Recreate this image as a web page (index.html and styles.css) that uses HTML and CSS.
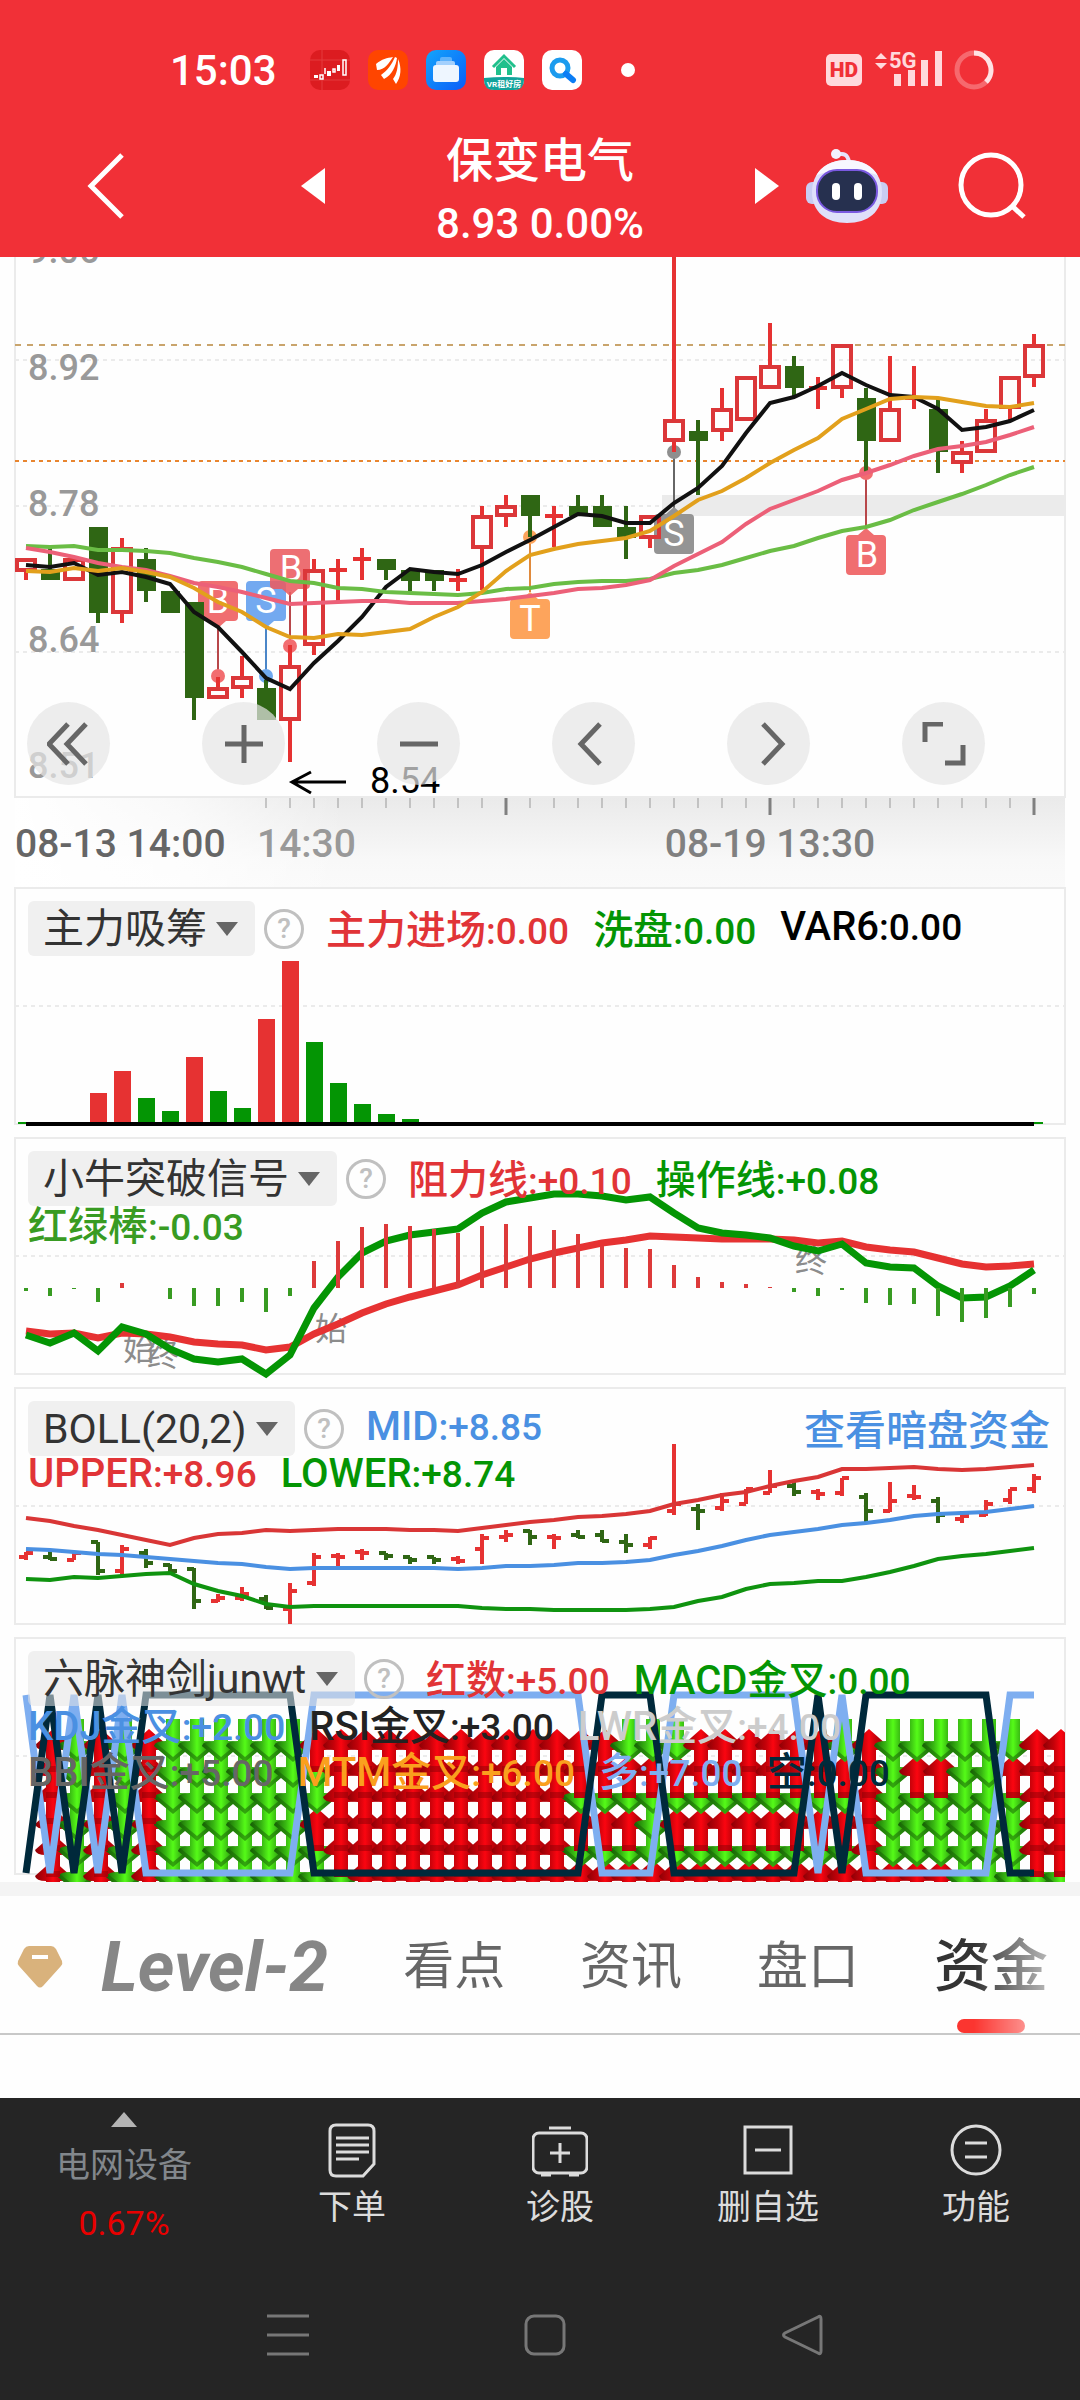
FILE: index.html
```
<!DOCTYPE html>
<html lang="zh-CN">

<head>
  <meta charset="utf-8">
  <meta name="viewport" content="width=device-width, initial-scale=1">
  <title>保变电气</title>
  <link rel="stylesheet" href="styles.css">
</head>

<body>
  <header class="header">
    <div class="status">
      <span class="clock">15:03</span>
      <div class="apps">
        <svg viewBox="0 0 40 40" width="40" height="40">
          <rect width="40" height="40" rx="10" fill="#dc1c20"/>
          <path d="M0 10h40M0 30h40M12 0v40" stroke="#e43a3c" stroke-width="1"/>
          <path d="M4 25h4v3H4zM17 21h4v5h-4zM27 15h3v6h-3z" fill="#fff"/>
          <path d="M10 25h3v4h-3zM15 18v6M23 19h2v3h-2zM33 10h3v15h-3z" fill="none" stroke="#fff" stroke-width="1.5"/>
        </svg>
        <svg viewBox="0 0 40 40" width="40" height="40">
          <rect width="40" height="40" rx="10" fill="#ff4500"/>
          <path d="M8 14C14 9 19 8 25 7C21 13 17 20 9 20zM13 25C19 21 24 14 27 7L29 8C28 16 24 25 16 29zM25 29C29 24 30 17 30 9C34 18 33 27 28 34z" fill="#fff"/>
        </svg>
        <svg viewBox="0 0 40 40" width="40" height="40">
          <defs>
            <linearGradient id="fileBg" x1="0" y1="0" x2="1" y2="1">
              <stop offset="0" stop-color="#12a5fb"/>
              <stop offset="1" stop-color="#0c5cf8"/>
            </linearGradient>
          </defs>
          <rect width="40" height="40" rx="10" fill="url(#fileBg)"/>
          <rect x="14" y="7" width="12" height="8" rx="2" fill="#5fb2fb"/>
          <rect x="10" y="11" width="19" height="8" rx="2" fill="#a3d0fd"/>
          <rect x="7" y="15" width="26" height="17" rx="3" fill="#eef6ff"/>
        </svg>
        <svg viewBox="0 0 40 40" width="40" height="40">
          <rect width="40" height="40" rx="10" fill="#fff"/>
          <path d="M0 28Q20 26 40 28V30Q40 40 30 40H10Q0 40 0 30z" fill="#12a39b"/>
          <path d="M9 17L20 6L31 17" fill="none" stroke="#20c08c" stroke-width="3"/>
          <path d="M12 17L20 9L28 17V25H23V18H17V25H12z" fill="#20c08c"/>
          <text x="20" y="37" class="vr">VR租好房</text>
        </svg>
        <svg viewBox="0 0 40 40" width="40" height="40">
          <rect width="40" height="40" rx="10" fill="#fff"/>
          <circle cx="18" cy="18" r="8" fill="none" stroke="#1c9bee" stroke-width="5"/>
          <path d="M24 24L31 30" stroke="#0b7df5" stroke-width="6" stroke-linecap="round"/>
        </svg>
      </div>
      <i class="more-dot"></i>
      <div class="signal">
        <span class="hd">HD</span>
        <svg viewBox="0 -6 70 52" width="70" height="52" fill="#ffd9dc">
          <path d="M2 9L8 3L14 9zM2 13H14L8 19z"/>
          <text x="16" y="18" class="net">5G</text>
          <path d="M21 24h7v12h-7zM35 20h7v16h-7zM48 10h7v26h-7zM62 1h7v35h-7z"/>
        </svg>
        <svg viewBox="0 0 40 40" width="40" height="40" fill="none" stroke-width="5">
          <circle cx="20" cy="20" r="17" stroke="#f6696e"/>
          <path d="M20 3A17 17 0 0 1 32 32" stroke="#ffe2e4"/>
        </svg>
      </div>
    </div>
    <nav class="nav">
      <div class="nav-left">
        <button class="icon-btn" aria-label="返回">
          <svg viewBox="0 0 40 68" width="40" height="68" fill="none" stroke="#fff" stroke-width="5">
            <path d="M36 3L5 34L36 65"/>
          </svg>
        </button>
      </div>
      <div class="stock">
        <button class="icon-btn" aria-label="上一只">
          <svg viewBox="0 0 24 36" width="24" height="36"><path d="M0 18L24 0V36z" fill="#fff"/></svg>
        </button>
        <div class="stock-info">
          <h1>保变电气</h1>
          <p>8.93 0.00%</p>
        </div>
        <button class="icon-btn" aria-label="下一只">
          <svg viewBox="0 0 24 36" width="24" height="36"><path d="M24 18L0 0V36z" fill="#fff"/></svg>
        </button>
      </div>
      <div class="nav-right">
        <button class="icon-btn" aria-label="智能助手">
          <svg viewBox="0 0 82 76" width="82" height="76">
            <path d="M31 7Q41 3 43 14" fill="none" stroke="#e6e3fb" stroke-width="4"/>
            <circle cx="30" cy="6" r="5" fill="#f3f2ff"/>
            <rect x="0" y="34" width="14" height="22" rx="6" fill="#c9cdf3"/>
            <rect x="68" y="34" width="14" height="22" rx="6" fill="#c9cdf3"/>
            <path d="M41 12C62 12 76 25 76 44C76 64 62 75 41 75C20 75 6 64 6 44C6 25 20 12 41 12z" fill="#dfe0fa"/>
            <path d="M41 12C56 12 67 18 72 28C60 20 22 20 10 28C15 18 26 12 41 12z" fill="#f8f7ff"/>
            <rect x="11" y="22" width="60" height="42" rx="20" fill="#26304f" stroke="#7a59e0" stroke-width="2"/>
            <rect x="26" y="35" width="8" height="17" rx="4" fill="#fff"/>
            <rect x="48" y="35" width="8" height="17" rx="4" fill="#fff"/>
          </svg>
        </button>
        <button class="icon-btn" aria-label="搜索">
          <svg viewBox="0 0 68 68" width="68" height="68" fill="none" stroke="#fff" stroke-width="5">
            <circle cx="33" cy="33" r="30"/>
            <path d="M54 54L66 65"/>
          </svg>
        </button>
      </div>
    </nav>
  </header>

  <main>
    <section class="chart">
      <svg class="plot" viewBox="0 257 1080 630" id="kline">
        <defs>
          <linearGradient id="axisBg" x1="0" y1="0" x2="0" y2="1">
            <stop offset="0" stop-color="#eaeaea"/>
            <stop offset="0.7" stop-color="#f8f8f8"/>
            <stop offset="1" stop-color="#fafafa"/>
          </linearGradient>
          <linearGradient id="axisFade">
            <stop offset="0" stop-color="#fff"/>
            <stop offset="0.5" stop-color="#fff" stop-opacity="0.7"/>
            <stop offset="1" stop-color="#fff" stop-opacity="0"/>
          </linearGradient>
        </defs>
        <rect x="16" y="797" width="1049" height="90" fill="url(#axisBg)"/>
        <rect x="15" y="797" width="330" height="90" fill="url(#axisFade)"/>
        <path class="frame" d="M15 257V797H1065V257"/>
        <rect x="662" y="495" width="403" height="21" fill="#ebebeb"/>
        <path class="grid" d="M15 360H1065M15 506H1065M15 652H1065"/>
        <path d="M15 345H1065" stroke="#c9a46c" stroke-width="2" stroke-dasharray="6 6"/>
        <path d="M15 461H1065" stroke="#e8852f" stroke-width="2" stroke-dasharray="4 4"/>
        <g class="price">
          <text x="28" y="263">9.06</text>
          <text x="28" y="380">8.92</text>
          <text x="28" y="516">8.78</text>
          <text x="28" y="652">8.64</text>
          <text x="28" y="778">8.51</text>
        </g>
        <g class="marks">
          <path d="M218 624V676" stroke="#b8474a"/>
          <path d="M290 592V644" stroke="#b8474a"/>
          <path d="M266 624V676" stroke="#4a86c8"/>
          <path d="M530 537V592" stroke="#e08a3c"/>
          <path d="M674 452V510" stroke="#666"/>
          <path d="M866 473V532" stroke="#b8474a"/>
          <circle cx="218" cy="676" r="7" fill="#f26d70"/>
          <circle cx="290" cy="646" r="7" fill="#f26d70"/>
          <circle cx="266" cy="676" r="7" fill="#6fa8ef"/>
          <circle cx="530" cy="537" r="7" fill="#fda45c"/>
          <circle cx="674" cy="452" r="7" fill="#8e8e8e"/>
          <circle cx="866" cy="473" r="7" fill="#f26d70"/>
          <path d="M202 581H234Q238 581 238 585V617Q238 621 234 621H226L218 628L210 621H202Q198 621 198 617V585Q198 581 202 581z" fill="#f06e70"/>
          <path d="M250 581H282Q286 581 286 585V617Q286 621 282 621H274L266 628L258 621H250Q246 621 246 617V585Q246 581 250 581z" fill="#73a9f0"/>
          <path d="M274 549H306Q310 549 310 553V585Q310 589 306 589H298L290 596L282 589H274Q270 589 270 585V553Q270 549 274 549z" fill="#ea5b60" fill-opacity="0.88"/>
          <path d="M514 599H522L530 592L538 599H546Q550 599 550 603V635Q550 639 546 639H514Q510 639 510 635V603Q510 599 514 599z" fill="#fda45c"/>
          <path d="M658 514H666L674 507L682 514H690Q694 514 694 518V550Q694 554 690 554H658Q654 554 654 550V518Q654 514 658 514z" fill="#949494"/>
          <path d="M850 535H858L866 528L874 535H882Q886 535 886 539V571Q886 575 882 575H850Q846 575 846 571V539Q846 535 850 535z" fill="#f06e70"/>
          <text x="218" y="613">B</text>
          <text x="266" y="613">S</text>
          <text x="291" y="581">B</text>
          <text x="530" y="631">T</text>
          <text x="674" y="546">S</text>
          <text x="867" y="567">B</text>
        </g>
        <g id="candles"></g>
        <path d="M346 782H292M311 772L292 782L311 793" fill="none" stroke="#000" stroke-width="3"/>
        <text x="370" y="793" class="low">8.54</text>
        <g id="ticks"></g>
        <g class="date">
          <text x="15" y="857" fill="#666">08-13 14:00</text>
          <text x="257" y="857" fill="#999">14:30</text>
          <text x="770" y="857" fill="#808080" text-anchor="middle">08-19 13:30</text>
        </g>
      </svg>
      <div class="tools">
        <button aria-label="最左"><svg viewBox="0 0 44 44"><path d="M21 2L2 22L21 42M39 2L20 22L39 42"/></svg></button>
        <button aria-label="放大"><svg viewBox="0 0 44 44"><path d="M22 3V41M3 22H41"/></svg></button>
        <button aria-label="缩小"><svg viewBox="0 0 44 44"><path d="M3 22H41"/></svg></button>
        <button aria-label="左移"><svg viewBox="0 0 44 44"><path d="M28 2L9 22L28 42"/></svg></button>
        <button aria-label="右移"><svg viewBox="0 0 44 44"><path d="M16 2L35 22L16 42"/></svg></button>
        <button aria-label="全屏"><svg viewBox="0 0 44 44"><path d="M21 2H3V20M41 23V41H23"/></svg></button>
      </div>
    </section>

    <section class="panel">
      <svg class="plot" viewBox="0 887 1080 250" id="zlxc">
        <rect class="frame" x="15" y="888" width="1050" height="236"/>
        <path class="grid" d="M15 1006H1065"/>
      </svg>
      <div class="legend">
        <div class="row">
          <select class="indicator" aria-label="指标一"><option>主力吸筹</option></select>
          <button class="help" aria-label="说明">?</button>
          <span class="red">主力进场<b>:0.00</b></span>
          <span class="green">洗盘<b>:0.00</b></span>
          <span class="black">VAR6<b>:0.00</b></span>
        </div>
      </div>
    </section>

    <section class="panel">
      <svg class="plot" viewBox="0 1137 1080 250" id="xntp">
        <rect class="frame" x="15" y="1138" width="1050" height="236"/>
        <path class="grid" d="M15 1256H1065"/>
        <g class="hint">
          <text x="123" y="1360">始</text>
          <text x="147" y="1366">终</text>
          <text x="315" y="1340">始</text>
          <text x="795" y="1272">终</text>
        </g>
      </svg>
      <div class="legend">
        <div class="row">
          <select class="indicator" aria-label="指标二"><option>小牛突破信号</option></select>
          <button class="help" aria-label="说明">?</button>
          <span class="red">阻力线<b>:+0.10</b></span>
          <span class="green">操作线<b>:+0.08</b></span>
        </div>
        <div class="row">
          <span class="leaf">红绿棒<b>:-0.03</b></span>
        </div>
      </div>
    </section>

    <section class="panel">
      <svg class="plot" viewBox="0 1387 1080 250" id="boll">
        <rect class="frame" x="15" y="1388" width="1050" height="236"/>
        <path class="grid" d="M15 1506H1065"/>
      </svg>
      <div class="legend">
        <div class="row">
          <select class="indicator" aria-label="指标三"><option>BOLL(20,2)</option></select>
          <button class="help" aria-label="说明">?</button>
          <span class="blue">MID<b>:+8.85</b></span>
          <a class="dark-pool" href="#">查看暗盘资金</a>
        </div>
        <div class="row">
          <span class="red">UPPER<b>:+8.96</b></span>
          <span class="green">LOWER<b>:+8.74</b></span>
        </div>
      </div>
    </section>

    <section class="panel">
      <svg class="plot" viewBox="0 1637 1080 245" id="lmsj">
        <defs>
          <linearGradient id="upBg">
            <stop offset="0" stop-color="#8c0005"/>
            <stop offset="0.3" stop-color="#c4020a"/>
            <stop offset="0.5" stop-color="#fb0510"/>
            <stop offset="0.7" stop-color="#c4020a"/>
            <stop offset="1" stop-color="#8c0005"/>
          </linearGradient>
          <linearGradient id="downBg">
            <stop offset="0" stop-color="#176206"/>
            <stop offset="0.3" stop-color="#37b512"/>
            <stop offset="0.5" stop-color="#55fb18"/>
            <stop offset="0.7" stop-color="#37b512"/>
            <stop offset="1" stop-color="#176206"/>
          </linearGradient>
          <g id="up">
            <path d="M0 0L18 16Q17 21 7 21V43H-7V21Q-17 21 -18 16z" fill="url(#upBg)"/>
            <path d="M-7 37H7V43H-7z" fill="#8c0005" fill-opacity="0.5"/>
          </g>
          <g id="down">
            <path d="M-7 0H7V22Q18 22 19 27L0 43L-19 27Q-18 22 -7 22z" fill="url(#downBg)"/>
            <path d="M-19 27L0 43L19 27L17 24L0 38L-17 24z" fill="#176206" fill-opacity="0.55"/>
          </g>
        </defs>
        <rect class="frame" x="15" y="1638" width="1050" height="236"/>
        <path class="grid" d="M15 1756H1065"/>
        <svg x="15" y="1637" width="1050" height="245" viewBox="15 1637 1050 245" id="arrows"></svg>
      </svg>
      <div class="legend">
        <div class="row">
          <select class="indicator" aria-label="指标四"><option>六脉神剑junwt</option></select>
          <button class="help" aria-label="说明">?</button>
          <span class="red">红数<b>:+5.00</b></span>
          <span class="green">MACD金叉<b>:0.00</b></span>
        </div>
        <div class="row">
          <span class="blue">KDJ金叉<b>:+2.00</b></span>
          <span class="ink">RSI金叉<b>:+3.00</b></span>
          <span class="silver">LWR金叉<b>:+4.00</b></span>
        </div>
        <div class="row">
          <span class="gray">BBI金叉<b>:+5.00</b></span>
          <span class="orange">MTM金叉<b>:+6.00</b></span>
          <span class="sky">多<b>:+7.00</b></span>
          <span class="navy">空<b>:0.00</b></span>
        </div>
      </div>
    </section>

    <nav class="tabs">
      <svg class="gem" viewBox="0 0 46 44" width="46" height="44">
        <path d="M12 1H34Q37 1 39 4L45 16Q46 19 44 21L26 41Q23 44 20 41L2 21Q0 19 1 16L7 4Q9 1 12 1z" fill="#d9b27c"/>
        <rect x="15" y="10" width="16" height="4" fill="#fff"/>
      </svg>
      <a class="level" href="#">Level-2</a>
      <a href="#">看点</a>
      <a href="#">资讯</a>
      <a href="#">盘口</a>
      <a class="active" href="#">资金</a>
    </nav>
  </main>

  <footer class="footer">
    <div class="actions">
      <a class="sector" href="#">
        <svg viewBox="0 0 26 15" width="26" height="15"><path d="M0 15L13 0L26 15z" fill="#b4b4b4"/></svg>
        <span>电网设备</span>
        <em>0.67%</em>
      </a>
      <button>
        <svg viewBox="0 0 56 56" width="56" height="56">
          <path d="M12 3H44Q50 3 50 9V42L39 54H12Q6 54 6 48V9Q6 3 12 3z"/>
          <path d="M12 16H45M12 23H45M12 30H45M12 37H35"/>
        </svg>
        下单
      </button>
      <button>
        <svg viewBox="0 0 56 56" width="56" height="56">
          <rect x="1" y="11" width="54" height="40" rx="6"/>
          <path d="M17 6H39M28 21V41M18 31H38M9 53H19M37 53H47"/>
        </svg>
        诊股
      </button>
      <button>
        <svg viewBox="0 0 56 56" width="56" height="56">
          <rect x="5" y="5" width="46" height="46"/>
          <path d="M15 28H41"/>
        </svg>
        删自选
      </button>
      <button>
        <svg viewBox="0 0 56 56" width="56" height="56">
          <circle cx="28" cy="28" r="24"/>
          <path d="M17 21H39M17 35H39"/>
        </svg>
        功能
      </button>
    </div>
    <div class="system">
      <button aria-label="最近任务"><svg viewBox="0 0 42 42"><path d="M0 2H42M0 21H42M0 40H42"/></svg></button>
      <button aria-label="主页"><svg viewBox="0 0 42 42"><rect x="2" y="2" width="38" height="38" rx="8"/></svg></button>
      <button aria-label="返回"><svg viewBox="0 0 42 42"><path d="M37 3Q40 1 40 5V37Q40 41 37 39L4 23Q1 21 4 19z"/></svg></button>
    </div>
  </footer>

  <script src="chart.js"></script>
</body>

</html>
```
FILE: styles.css
```
* {
  box-sizing: border-box;
}

body {
  margin: 0;
  background: #fefefe;
  font-family: Roboto, "Noto Sans CJK SC", sans-serif;
}

button {
  padding: 0;
  border: 0;
  background: none;
  font-family: inherit;
}

a {
  text-decoration: none;
}

svg {
  display: block;
}

h1, p {
  margin: 0;
}

/* header */
.header {
  background: #f13037;
  color: #fff;
}

.status {
  display: flex;
  align-items: center;
  height: 128px;
  padding: 12px 86px 0 170px;
}

.clock {
  width: 140px;
  font-size: 42px;
  font-weight: 500;
}

.apps {
  display: flex;
  gap: 18px;
}

.vr {
  fill: #fff;
  font-size: 8px;
  font-weight: 700;
  text-anchor: middle;
}

.more-dot {
  width: 14px;
  height: 14px;
  margin-left: 39px;
  border-radius: 50%;
  background: #fff;
}

.signal {
  display: flex;
  align-items: center;
  gap: 11px;
  margin-left: auto;
}

.hd {
  padding: 0 4px;
  border-radius: 5px;
  background: #ffd9dc;
  color: #f13037;
  font-size: 21px;
  font-weight: 900;
  line-height: 32px;
}

.net {
  font-size: 22px;
  font-weight: 700;
}

.nav {
  display: grid;
  grid-template-columns: 290px 1fr 290px;
  align-items: center;
  height: 129px;
}

.nav-left {
  padding-left: 86px;
}

.icon-btn {
  margin-bottom: 14px;
}

.stock {
  display: flex;
  align-items: center;
  justify-content: space-between;
  padding: 0 11px;
}

.stock-info {
  text-align: center;
}

.stock-info h1 {
  font-size: 47px;
  font-weight: 500;
  line-height: 62px;
}

.stock-info p {
  font-size: 42px;
  font-weight: 500;
  line-height: 64px;
}

.nav-right {
  display: flex;
  align-items: center;
  justify-content: space-between;
  padding: 0 54px 0 16px;
}

/* charts */
.chart {
  position: relative;
}

.plot {
  width: 100%;
  height: auto;
}

.frame {
  fill: none;
  stroke: #ebebeb;
  stroke-width: 2;
}

.grid {
  stroke: #ebebeb;
  stroke-width: 2;
  stroke-dasharray: 4 4;
}

.price {
  fill: #999;
  font-size: 36px;
  font-weight: 500;
}

.marks {
  fill: #fff;
  stroke-width: 2;
  font-size: 36px;
  text-anchor: middle;
}

.low {
  font-size: 36px;
}

.date {
  font-size: 39px;
  font-weight: 500;
}

.hint {
  fill: #8c8c8c;
  font-size: 32px;
}

.line {
  fill: none;
}

.tools {
  position: absolute;
  right: 95px;
  bottom: 102px;
  left: 27px;
  display: flex;
  justify-content: space-between;
}

.tools button {
  display: grid;
  place-items: center;
  width: 83px;
  height: 83px;
  border-radius: 50%;
  background: rgba(229, 229, 229, 0.7);
}

.tools svg {
  width: 44px;
  height: 44px;
  fill: none;
  stroke: #666;
  stroke-width: 5;
}

.panel {
  display: grid;
}

.plot, .legend {
  grid-area: 1 / 1;
}

.legend {
  padding: 14px 30px 0 28px;
  font-size: 40px;
}

.row {
  display: flex;
  align-items: center;
  gap: 24px;
  height: 46px;
  white-space: nowrap;
}

.row:first-child {
  height: 55px;
  margin-bottom: -4px;
}

.row span, .dark-pool {
  padding-bottom: 4px;
  font-weight: 500;
}

.row b {
  font-size: 37px;
  font-weight: 500;
}

.indicator {
  appearance: none;
  height: 55px;
  margin-right: -15px;
  padding: 0 48px 0 15px;
  border: 0;
  border-radius: 6px;
  background: rgba(228, 228, 228, 0.55) url("data:image/svg+xml,%3Csvg xmlns='http://www.w3.org/2000/svg' width='22' height='14'%3E%3Cpath d='M0 0H22L11 14z' fill='%23666'/%3E%3C/svg%3E") no-repeat right 17px center;
  color: #333;
  font-family: inherit;
  font-size: 41px;
}

.help {
  width: 40px;
  height: 40px;
  margin-right: -2px;
  border: 3px solid #c0c0c0;
  border-radius: 50%;
  color: #c0c0c0;
  font-size: 28px;
  font-weight: 500;
  line-height: 34px;
}

.dark-pool {
  margin-left: auto;
  font-size: 41px;
}

.red {
  color: #e13437;
}

.green {
  color: #049504;
}

.leaf {
  color: #389b22;
}

.black {
  color: #000;
}

.blue, .dark-pool {
  color: #4a90e2;
}

.ink {
  color: #222;
}

.silver {
  color: #ccc;
}

.gray {
  color: #666;
}

.orange {
  color: #faa01e;
}

.sky {
  color: #7eaef0;
}

.navy {
  color: #002b3c;
}

/* tabs */
.tabs {
  display: flex;
  align-items: center;
  height: 153px;
  padding: 5px 32px 0 17px;
  border-top: 14px solid #f4f4f4;
  border-bottom: 2px solid #c8c8c8;
  white-space: nowrap;
}

.tabs a {
  margin-left: auto;
  color: #666;
  font-size: 51px;
  line-height: 132px;
}

.tabs .level {
  margin-left: 38px;
  color: #868686;
  font-size: 70px;
  font-style: italic;
  font-weight: 700;
}

.tabs .active {
  position: relative;
  color: #333;
  font-size: 57px;
  font-weight: 500;
  -webkit-mask-image: linear-gradient(to right, #000 35%, rgba(0, 0, 0, 0.35));
  mask-image: linear-gradient(to right, #000 35%, rgba(0, 0, 0, 0.35));
}

.tabs .active::after {
  content: "";
  position: absolute;
  bottom: 0;
  left: 50%;
  width: 68px;
  height: 14px;
  margin-left: -34px;
  border-radius: 7px;
  background: #fb3530;
}

/* footer */
.footer {
  margin-top: 63px;
  background: #252525;
}

.actions {
  display: flex;
  height: 176px;
}

.actions button {
  display: flex;
  flex: 208;
  flex-direction: column;
  align-items: center;
  padding-top: 24px;
  color: #dcdcdc;
  font-size: 34px;
  line-height: 58px;
}

.actions button svg {
  fill: none;
  stroke: #dcdcdc;
  stroke-width: 3;
}

.sector {
  display: flex;
  flex: 248;
  flex-direction: column;
  align-items: center;
  padding-top: 14px;
  color: #82878c;
  font-size: 34px;
}

.sector span {
  margin-top: 11px;
  line-height: 54px;
}

.sector em {
  color: #e80000;
  font-style: normal;
  line-height: 62px;
}

.system {
  display: flex;
  justify-content: space-between;
  height: 126px;
  padding: 0 257px 0 267px;
}

.system button {
  display: grid;
  place-items: start;
  padding-top: 40px;
}

.system svg {
  width: 42px;
  height: 42px;
  fill: none;
  stroke: #777;
  stroke-width: 3;
}
```
FILE: chart.js
```
const NS = 'http://www.w3.org/2000/svg';
const px = (i) => 26 + i * 24;

function add(parent, name, attrs) {
  const el = document.createElementNS(NS, name);
  Object.keys(attrs).forEach((key) => el.setAttribute(key, attrs[key]));
  parent.appendChild(el);
  return el;
}

function line(parent, ys, color, width) {
  const points = ys.map((y, i) => px(i) + ',' + y).join(' ');
  add(parent, 'polyline', { class: 'line', points, stroke: color, 'stroke-width': width || 4 });
}

// type, high, body top, body bottom, low
const candles = [
  ['r', 558, 558, 572, 580], ['g', 548, 569, 580, 580], ['r', 558, 558, 581, 581], ['g', 527, 527, 613, 623],
  ['r', 538, 547, 614, 623], ['g', 548, 559, 591, 602], ['g', 591, 591, 613, 613], ['g', 602, 602, 698, 720],
  ['r', 677, 687, 699, 699], ['r', 656, 676, 689, 698], ['g', 680, 688, 720, 720], ['r', 645, 665, 721, 762],
  ['r', 559, 569, 646, 655], ['r', 559, 570, 570, 602], ['r', 548, 559, 559, 580], ['g', 559, 559, 570, 580],
  ['g', 570, 570, 581, 591], ['g', 570, 570, 581, 591], ['r', 569, 580, 580, 591], ['r', 506, 515, 549, 590],
  ['r', 495, 505, 517, 527], ['g', 495, 495, 516, 537], ['r', 506, 516, 516, 547], ['g', 495, 506, 516, 516],
  ['g', 495, 506, 527, 527], ['g', 506, 527, 538, 559], ['r', 515, 515, 539, 548], ['r', 248, 419, 442, 452],
  ['g', 420, 431, 441, 495], ['r', 388, 408, 432, 441], ['r', 376, 376, 421, 421], ['r', 323, 365, 389, 389],
  ['g', 356, 366, 388, 397], ['r', 377, 388, 388, 409], ['r', 344, 344, 389, 398], ['g', 388, 398, 441, 472],
  ['r', 356, 408, 442, 442], ['r', 366, 398, 398, 409], ['g', 399, 409, 452, 473], ['r', 441, 451, 464, 473],
  ['r', 409, 419, 453, 453], ['r', 376, 376, 409, 420], ['r', 334, 344, 378, 387]
];

const kline = document.getElementById('candles');
candles.forEach(([type, high, top, bottom, low], i) => {
  const x = px(i);
  const color = type === 'r' ? '#e63232' : '#2f6614';
  add(kline, 'path', { d: `M${x} ${high}V${top}M${x} ${bottom}V${low}`, stroke: color, 'stroke-width': 4 });
  if (top === bottom) {
    add(kline, 'path', { d: `M${x - 9} ${top}H${x + 9}`, stroke: color, 'stroke-width': 4 });
  } else if (type === 'r') {
    add(kline, 'rect', { x: x - 9, y: top + 2, width: 18, height: bottom - top - 4, fill: 'none', stroke: '#db3739', 'stroke-width': 4 });
  } else {
    add(kline, 'rect', { x: x - 9, y: top, width: 19, height: bottom - top, fill: color });
  }
});

line(kline, [565, 567, 563, 575, 572, 577, 584, 612, 627, 652, 678, 689, 663, 641, 617, 587, 569, 572, 574, 565, 552, 540, 527, 514, 516, 523, 523, 503, 488, 466, 433, 403, 397, 386, 373, 385, 395, 397, 409, 430, 427, 421, 410], '#111');
line(kline, [546, 547, 546, 550, 550, 551, 553, 558, 562, 567, 574, 581, 583, 588, 589, 592, 593, 594, 595, 593, 589, 588, 584, 582, 581, 581, 579, 573, 570, 565, 558, 551, 546, 538, 531, 527, 520, 510, 502, 494, 485, 475, 467], '#6abd45');
line(kline, [548, 552, 557, 563, 567, 570, 576, 583, 587, 592, 598, 604, 603, 602, 601, 601, 603, 603, 603, 601, 599, 596, 593, 589, 588, 585, 580, 566, 554, 542, 524, 509, 500, 491, 480, 473, 465, 456, 449, 446, 442, 435, 427], '#ec6078');
line(kline, [571, 572, 568, 571, 568, 572, 577, 588, 602, 612, 627, 637, 638, 634, 635, 632, 629, 617, 607, 592, 571, 555, 549, 544, 541, 538, 531, 516, 500, 491, 478, 463, 450, 438, 419, 409, 399, 397, 398, 402, 406, 407, 403], '#e2a01c');

// time axis
const ticks = document.getElementById('ticks');
for (let i = 10; i < 43; i++) {
  const major = i === 20 || i === 31 || i === 42;
  add(ticks, 'path', { d: `M${px(i)} 798V${major ? 815 : 808}`, stroke: major ? '#808080' : '#999', 'stroke-width': major ? 3 : 1 });
}

// 主力吸筹
const zlxc = document.getElementById('zlxc');
const bars = ['r1093', 'r1071', 'g1098', 'g1111', 'r1057', 'g1091', 'g1108', 'r1019', 'r961', 'g1042', 'g1083', 'g1104', 'g1114', 'g1119'];
add(zlxc, 'path', { d: 'M18 1123H1043', stroke: '#049504', 'stroke-width': 2 });
bars.forEach((bar, i) => {
  const y = Number(bar.slice(1));
  add(zlxc, 'rect', { x: px(i + 3) - 8, y, width: 17, height: 1123 - y, fill: bar[0] === 'r' ? '#e63232' : '#049504' });
});
add(zlxc, 'path', { d: 'M26 1124H1034', stroke: '#000', 'stroke-width': 4 });

// 小牛突破信号
const xntp = document.getElementById('xntp');
line(xntp, [1331, 1334, 1333, 1338, 1333, 1334, 1337, 1342, 1344, 1345, 1350, 1347, 1334, 1324, 1313, 1304, 1297, 1291, 1285, 1275, 1267, 1259, 1253, 1248, 1243, 1240, 1236, 1237, 1238, 1239, 1239, 1239, 1240, 1243, 1241, 1247, 1250, 1252, 1258, 1264, 1267, 1266, 1264], '#e63232', 7);
line(xntp, [1335, 1343, 1333, 1351, 1327, 1334, 1349, 1359, 1362, 1359, 1374, 1355, 1308, 1277, 1253, 1241, 1235, 1232, 1229, 1213, 1202, 1198, 1194, 1194, 1196, 1200, 1197, 1213, 1228, 1233, 1235, 1238, 1246, 1251, 1244, 1263, 1267, 1268, 1286, 1298, 1297, 1286, 1270], '#049504', 7);
[1291, 1296, 1289, 1302, 1283, 1288, 1299, 1306, 1306, 1302, 1312, 1296, 1261, 1241, 1227, 1224, 1226, 1229, 1233, 1226, 1224, 1226, 1230, 1234, 1246, 1248, 1249, 1265, 1277, 1282, 1284, 1287, 1292, 1296, 1290, 1303, 1305, 1304, 1316, 1322, 1318, 1307, 1294].forEach((y, i) => {
  add(xntp, 'path', { d: `M${px(i)} 1288V${y}`, stroke: y < 1288 ? '#dd3a3a' : '#389b22', 'stroke-width': 4 });
});

// BOLL
const boll = document.getElementById('boll');
const scale = (y) => Math.round(1474 + (y - 334) * 0.35);
candles.forEach(([type, high, top, bottom, low], i) => {
  const x = px(i);
  const open = scale(type === 'r' ? bottom - 2 : top + 2);
  const close = scale(type === 'r' ? top + 2 : bottom - 2);
  add(boll, 'path', {
    d: `M${x} ${scale(high)}V${scale(low)}M${x - 7} ${open}H${x}M${x} ${close}H${x + 7}`,
    stroke: type === 'r' ? '#e63232' : '#2f6614',
    'stroke-width': 4
  });
});
line(boll, [1518, 1521, 1526, 1530, 1535, 1540, 1545, 1538, 1534, 1533, 1530, 1531, 1530, 1529, 1529, 1529, 1530, 1530, 1531, 1528, 1525, 1522, 1520, 1517, 1516, 1514, 1511, 1504, 1500, 1495, 1492, 1486, 1481, 1477, 1469, 1469, 1468, 1467, 1469, 1470, 1469, 1467, 1465], '#d93636');
line(boll, [1549, 1550, 1552, 1554, 1555, 1557, 1559, 1561, 1563, 1564, 1567, 1569, 1568, 1568, 1568, 1568, 1568, 1568, 1569, 1568, 1566, 1566, 1565, 1563, 1563, 1562, 1560, 1555, 1551, 1546, 1540, 1535, 1532, 1529, 1525, 1523, 1520, 1516, 1514, 1513, 1512, 1509, 1506], '#4a90e2');
line(boll, [1579, 1580, 1577, 1578, 1576, 1574, 1573, 1584, 1591, 1596, 1604, 1607, 1606, 1606, 1606, 1606, 1606, 1606, 1606, 1608, 1609, 1609, 1610, 1610, 1610, 1610, 1609, 1607, 1601, 1597, 1589, 1584, 1583, 1581, 1581, 1577, 1572, 1566, 1559, 1556, 1554, 1551, 1548], '#0f930f');

// 六脉神剑: one string per row, lower rows are drawn first
const rows = [
  'rgrgrggggggrrrrrrrrrrrrrgggrrrrrrgrggggggrr',
  'rgrgrgggggggrrrrrrrrrrrrrrrrrrrrrrrgrrggrrr',
  'rgrgrgggggggrrrrrrrrrrggggggggggggrggggggrr',
  'rgrgrggggggrrrrrrrrrrrrrrgrrrrrrrrrggggggrr',
  'rgrgrgggggggrrrrrrrrrrggggggggggggrggggggrr',
  'rgrgrggggggggrrrrrrrrrrrrrrrrrrrrrrrrrggggg'
];
const arrows = document.getElementById('arrows');
for (let r = rows.length - 1; r >= 0; r--) {
  rows[r].split('').forEach((type, i) => {
    const y = Math.round(1719 + r * 26.2) + (type === 'r' ? 10 : 0);
    add(arrows, 'use', { href: type === 'r' ? '#up' : '#down', x: 53 + i * 24, y });
  });
}

// 多 / 空
const lmsj = document.getElementById('lmsj');
const isLong = (i) => [0, 2, 4, 34, 41, 42].includes(i) || (i >= 12 && i <= 23) || (i >= 27 && i <= 32);
line(lmsj, candles.map((c, i) => (isLong(i) ? 1695 : 1873)), '#7eaef0', 7);
line(lmsj, candles.map((c, i) => (isLong(i) ? 1873 : 1695)), '#00293b', 7);
```
